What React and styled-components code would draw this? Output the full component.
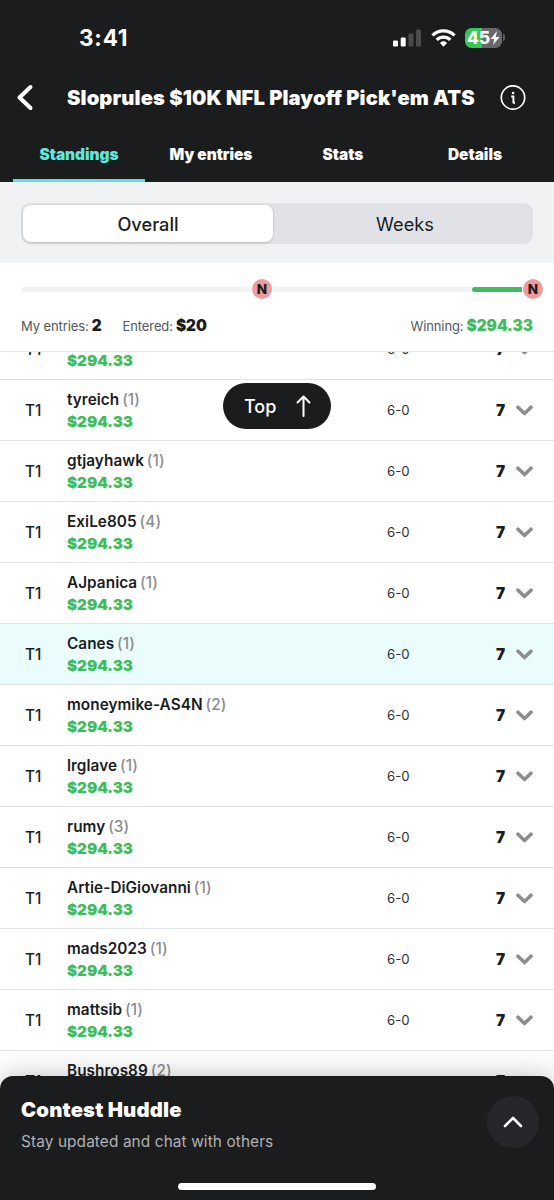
import React from 'react'
import styled, { createGlobalStyle, css } from 'styled-components'

const TABS = ['Standings', 'My entries', 'Stats', 'Details'];

const ENTRIES = [
  { name: 'jrodz', count: 1 },
  { name: 'tyreich', count: 1 },
  { name: 'gtjayhawk', count: 1 },
  { name: 'ExiLe805', count: 4 },
  { name: 'AJpanica', count: 1 },
  { name: 'Canes', count: 1, mine: true },
  { name: 'moneymike-AS4N', count: 2 },
  { name: 'lrglave', count: 1 },
  { name: 'rumy', count: 3 },
  { name: 'Artie-DiGiovanni', count: 1 },
  { name: 'mads2023', count: 1 },
  { name: 'mattsib', count: 1 },
  { name: 'Bushros89', count: 2 },
];

const GlobalStyle = createGlobalStyle`
  * {
    box-sizing: border-box;
  }

  body {
    margin: 0;
    background: #fff;
    font-family: Inter, sans-serif;
    color: #1b1c1e;
  }
`

const Screen = styled.div`
  position: relative;
  width: 554px;
  height: 1200px;
  display: flex;
  flex-direction: column;
  overflow: hidden;
  white-space: nowrap;
`

const Header = styled.header`
  height: 182px;
  background: #1b1c1e;
  color: white;
  display: flex;
  flex-direction: column;
  flex-shrink: 0;
`

const StatusBar = styled.div`
  height: 70px;
  padding: 5px 49px 0 79px;
  display: flex;
  align-items: center;
  justify-content: space-between;
`

const Time = styled.span`
  font-size: 22.5px;
  font-weight: 700;
  letter-spacing: 0.8px;
`

const StatusIcons = styled.div`
  display: flex;
  align-items: center;
`

const Signal = styled.svg`
  margin-right: 10px;
`

const Battery = styled.div`
  width: 37px;
  height: 20px;
  margin-left: 9px;
  border-radius: 6.5px;
  background: linear-gradient(90deg, #34c759 16.5px, #67686a 16.5px);
  display: flex;
  align-items: center;
  justify-content: center;
  font-size: 17.5px;
  font-weight: 800;
`

const BatteryTip = styled.span`
  width: 2px;
  height: 7px;
  margin-left: 1px;
  border-radius: 0 2px 2px 0;
  background: #5a5b5d;
`

const TitleBar = styled.div`
  height: 55px;
  padding: 0 28px 0 16px;
  display: flex;
  align-items: center;
`

const Title = styled.h1`
  flex: 1;
  margin: 0 0 0 33px;
  font-size: 20.2px;
  font-weight: 900;
  letter-spacing: 0.11px;
`

const Tabs = styled.nav`
  flex: 1;
  padding: 0 13px;
  display: flex;
`

const Tab = styled.div`
  flex: 1;
  padding-top: 5px;
  display: flex;
  align-items: center;
  justify-content: center;
  font-size: 15.4px;
  font-weight: 900;
  border-bottom: 3px solid transparent;
  ${({ $active }) => $active && css`
    color: #5fe8de;
    border-color: #5fe0da;
  `}
`

const SwitchArea = styled.div`
  height: 81px;
  padding: 21px 21px 0;
  background: #f1f2f4;
  flex-shrink: 0;
`

const Switch = styled.div`
  height: 41px;
  padding: 2px;
  display: flex;
  border-radius: 9px;
  background: #e1e2e5;
`

const Option = styled.div`
  flex: 1;
  padding: 1px 0 0 6px;
  display: flex;
  align-items: center;
  justify-content: center;
  font-size: 18.2px;
  font-weight: 400;
  border-radius: 8px;
  ${({ $active }) => $active && css`
    flex: 0 0 250px;
    padding-left: 0;
    font-weight: 500;
    background: white;
    box-shadow: 0 1px 3px rgba(0, 0, 0, 0.18);
  `}
`

const Summary = styled.section`
  height: 89px;
  padding: 15px 21px 0;
  border-bottom: 1px solid #e6e7e8;
  flex-shrink: 0;
`

const Progress = styled.div`
  height: 22px;
  margin-right: -11px;
  display: flex;
  align-items: center;
`

const Track = styled.div`
  flex: ${({ $width }) => ($width ? `0 0 ${$width}px` : 1)};
  height: 5px;
  border-radius: ${({ $end }) => ($end ? '3px 0 0 3px' : 0)};
  background: ${({ $won }) => ($won ? '#3fbc5b' : '#f1f2f4')};
`

const Marker = styled.div`
  width: 20px;
  height: 20px;
  margin: 0 1px;
  border-radius: 50%;
  background: #ef9a9c;
  display: flex;
  align-items: center;
  justify-content: center;
  font-size: 13.5px;
  font-weight: 800;
`

const Stats = styled.div`
  height: 51px;
  display: flex;
  align-items: center;
`

const Stat = styled.div`
  display: flex;
  align-items: baseline;
  gap: 3px;
  margin-right: ${({ $last }) => ($last ? 0 : '21px')};
  margin-left: ${({ $last }) => ($last ? 'auto' : 0)};
  font-size: 13px;
  letter-spacing: -0.1px;
  color: #55575c;

  b {
    font-size: 15.3px;
    font-weight: 900;
    letter-spacing: 0;
    color: ${({ $last }) => ($last ? '#3fbc5b' : '#1b1c1e')};
  }
`

const ListViewport = styled.div`
  flex: 1;
  overflow: hidden;
`

/* list is already scrolled part of a row */
const List = styled.div`
  margin-top: -33px;
`

const Row = styled.div`
  height: 61px;
  padding: 0 21px 0 25px;
  display: grid;
  grid-template-columns: 42px 1fr 109px 20px 17px;
  align-items: center;
  border-bottom: 1px solid #e3e4e5;
  background: ${({ $mine }) => ($mine ? '#eafcfb' : 'white')};
`

const Rank = styled.span`
  font-size: 15.3px;
  font-weight: 500;
`

const Player = styled.div`
  padding-top: 1px;
  font-size: 15.3px;
  font-weight: 600;
  letter-spacing: 0.06px;
  line-height: 21px;
`

const Count = styled.span`
  margin-left: -1px;
  font-weight: 500;
  color: #8b8c8f;
`

const Prize = styled.div`
  margin-top: 1px;
  font-size: 15.2px;
  font-weight: 900;
  letter-spacing: 0;
  color: #3fbc5b;
`

const Score = styled.span`
  font-size: 13.2px;
  color: #303135;
`

const Points = styled.span`
  font-size: 15.3px;
  font-weight: 900;
`

const TopButton = styled.button`
  position: absolute;
  top: 383px;
  left: 223px;
  width: 108px;
  height: 46px;
  padding: 0 20px 0 21px;
  display: flex;
  align-items: center;
  justify-content: space-between;
  border: 0;
  border-radius: 23px;
  background: #1b1c1e;
  color: white;
  font-family: inherit;
  font-size: 18px;
  font-weight: 500;
`

const Huddle = styled.footer`
  position: absolute;
  left: 0;
  right: 0;
  bottom: 0;
  height: 124px;
  padding: 20px 15px 0 21px;
  display: flex;
  justify-content: space-between;
  border-radius: 13px 13px 0 0;
  background: #1b1c1e;
  color: white;
  box-shadow: 0 0 28px rgba(0, 0, 0, 0.25);
`

const HuddleTitle = styled.h2`
  margin: 1px 0 0;
  font-size: 20.3px;
  font-weight: 900;
  letter-spacing: 0.18px;
  line-height: 26px;
`

const HuddleText = styled.p`
  margin: 9px 0 0;
  font-size: 15.4px;
  line-height: 20px;
  letter-spacing: 0.1px;
  color: #b1b2b4;
`

const RoundButton = styled.div`
  width: 52px;
  height: 52px;
  border-radius: 50%;
  background: #26272d;
  display: flex;
  align-items: center;
  justify-content: center;
`

const HomeIndicator = styled.div`
  position: absolute;
  left: 178px;
  bottom: 10px;
  width: 198px;
  height: 7px;
  border-radius: 4px;
  background: white;
`

const Line = ({ d, width, height, color = 'white', weight = 2 }) => (
  <svg width={width} height={height} fill="none" stroke={color} strokeWidth={weight} strokeLinecap="round" strokeLinejoin="round">
    <path d={d} />
  </svg>
)

const StatusBarContent = () => (
  <StatusBar>
    <Time>3:41</Time>
    <StatusIcons>
      <Signal width="29" height="18" fill="white">
        <rect x="1" y="11.5" width="5" height="6" rx="1.3" />
        <rect x="8.7" y="8.5" width="5" height="9" rx="1.3" />
        <rect x="16.4" y="4.5" width="5" height="13" rx="1.3" fill="#4a4b4d" />
        <rect x="24" y="0.5" width="5" height="17" rx="1.3" fill="#4a4b4d" />
      </Signal>
      <svg width="25" height="18" fill="none" stroke="white" strokeWidth="3.2">
        <path d="M1.5 6.5 C7.5 0.4 17.5 0.4 23.5 6.5" />
        <path d="M5.7 10.8 C9.5 7.2 15.5 7.2 19.3 10.8" />
        <path d="M8.9 14 C11 11.8 14 11.8 16.1 14 L12.5 17.7 Z" fill="white" stroke="none" />
      </svg>
      <Battery>
        45
        <svg width="10" height="14" viewBox="0 0 10 14" fill="white">
          <path d="M7 0 L0.5 8 H4.2 L3 14 L9.5 6 H5.8 Z" />
        </svg>
      </Battery>
      <BatteryTip />
    </StatusIcons>
  </StatusBar>
)

const App = () => {
  return (
    <Screen>
      <GlobalStyle />
      <Header>
        <StatusBarContent />
        <TitleBar>
          <Line width={18} height={27} weight={4} d="M14.5 3 L3.5 13.5 L14.5 24" />
          <Title>Sloprules $10K NFL Playoff Pick'em ATS</Title>
          <svg width="26" height="26" fill="none" stroke="white" strokeWidth="1.7">
            <circle cx="13" cy="12.5" r="11.7" />
            <path d="M11.2 11.5 H13.4 V17.8 M12.8 17.8 H15" strokeWidth="1.9" />
            <circle cx="13.1" cy="8" r="1.3" fill="white" stroke="none" />
          </svg>
        </TitleBar>
        <Tabs>
          {TABS.map((tab, i) => (
            <Tab key={tab} $active={i === 0}>{tab}</Tab>
          ))}
        </Tabs>
      </Header>

      <SwitchArea>
        <Switch>
          <Option $active>Overall</Option>
          <Option>Weeks</Option>
        </Switch>
      </SwitchArea>

      <Summary>
        <Progress>
          <Track $width={230} $end />
          <Marker>N</Marker>
          <Track />
          <Track $width={50} $end $won />
          <Marker>N</Marker>
        </Progress>
        <Stats>
          <Stat>My entries: <b>2</b></Stat>
          <Stat>Entered: <b>$20</b></Stat>
          <Stat $last>Winning: <b>$294.33</b></Stat>
        </Stats>
      </Summary>

      <ListViewport>
        <List>
          {ENTRIES.map(({ name, count, mine }) => (
            <Row key={name} $mine={mine}>
              <Rank>T1</Rank>
              <Player>
                {name} <Count>({count})</Count>
                <Prize>$294.33</Prize>
              </Player>
              <Score>6-0</Score>
              <Points>7</Points>
              <Line width={17} height={11} color="#8c8d90" weight={3.6} d="M2 2.2 L8.5 8.5 L15 2.2" />
            </Row>
          ))}
        </List>
      </ListViewport>

      <TopButton>
        Top
        <Line width={15} height={22} d="M7.5 21 V2 M1.5 7.5 L7.5 1.5 L13.5 7.5" />
      </TopButton>

      <Huddle>
        <div>
          <HuddleTitle>Contest Huddle</HuddleTitle>
          <HuddleText>Stay updated and chat with others</HuddleText>
        </div>
        <RoundButton>
          <Line width={20} height={14} weight={2.6} d="M2 11 L10 3 L18 11" />
        </RoundButton>
        <HomeIndicator />
      </Huddle>
    </Screen>
  )
}

export default App
